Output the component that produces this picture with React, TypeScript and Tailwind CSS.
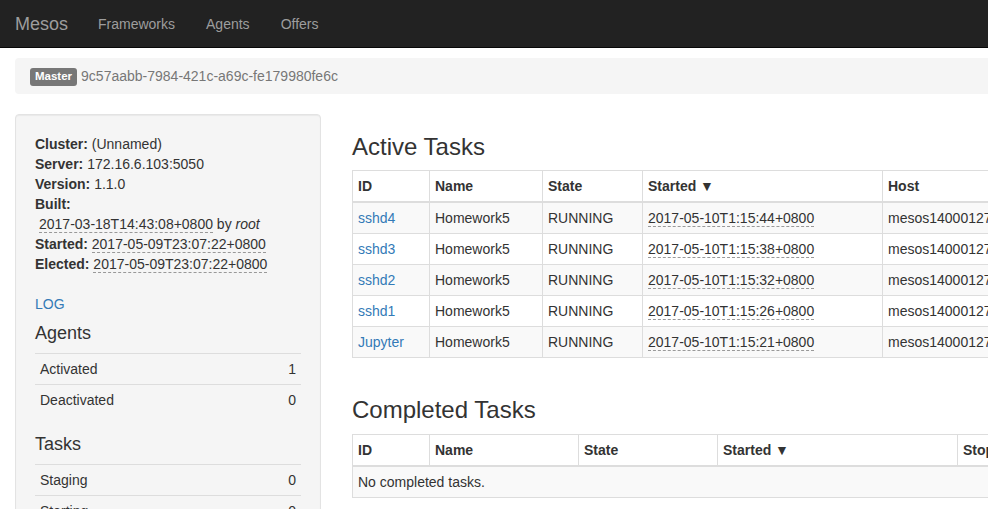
import React from 'react';

const activeTasks = [
  { id: 'sshd4', name: 'Homework5', state: 'RUNNING', started: '2017-05-10T1:15:44+0800', host: 'mesos1400012701' },
  { id: 'sshd3', name: 'Homework5', state: 'RUNNING', started: '2017-05-10T1:15:38+0800', host: 'mesos1400012701' },
  { id: 'sshd2', name: 'Homework5', state: 'RUNNING', started: '2017-05-10T1:15:32+0800', host: 'mesos1400012701' },
  { id: 'sshd1', name: 'Homework5', state: 'RUNNING', started: '2017-05-10T1:15:26+0800', host: 'mesos1400012701' },
  { id: 'Jupyter', name: 'Homework5', state: 'RUNNING', started: '2017-05-10T1:15:21+0800', host: 'mesos1400012701' },
];

function Abbr({ children }: { children: React.ReactNode }) {
  return <span className="border-b border-dashed border-[#999] cursor-help">{children}</span>;
}

function StatTable({ rows }: { rows: [string, number][] }) {
  return (
    <table className="w-full mb-5">
      <tbody>
        {rows.map(([label, value]) => (
          <tr key={label} className="border-t border-[#ddd]">
            <td className="px-[5px] py-[5px] leading-5">{label}</td>
            <td className="px-[5px] py-[5px] leading-5 text-right">{value}</td>
          </tr>
        ))}
      </tbody>
    </table>
  );
}

const th = 'border border-[#ddd] border-b-2 px-[5px] py-[5px] text-left font-bold leading-5 align-bottom';
const td = 'border border-[#ddd] px-[5px] py-[5px] leading-5 whitespace-nowrap overflow-hidden';

export default function App() {
  return (
    <div className="w-full overflow-hidden bg-white text-[14px] leading-5 text-[#333] font-['Liberation_Sans',Arial,sans-serif]">
      <div className="w-[1344px]">
        {/* Navbar */}
        <div className="h-12 bg-[#222] border-b border-[#080808] flex items-center mb-[10px]">
          <span className="px-[15px] text-[18px] text-[#9d9d9d]">Mesos</span>
          <span className="px-[15px] text-[#9d9d9d]">Frameworks</span>
          <span className="pl-[16px] pr-[15px] text-[#9d9d9d]">Agents</span>
          <span className="pl-[16px] pr-[15px] text-[#9d9d9d]">Offers</span>
        </div>

        <div className="px-[15px]">
          {/* Breadcrumb */}
          <div className="bg-[#f5f5f5] rounded py-2 px-[15px] mb-5 flex items-center h-9">
            <span className="bg-[#777] text-white font-bold text-[11.5px] leading-none rounded-[3px] px-[5px] h-[18px] flex items-center mr-[4px] mt-[1px]">Master</span>
            <span className="text-[#777]">9c57aabb-7984-421c-a69c-fe179980fe6c</span>
          </div>

          <div className="flex items-start">
            {/* Sidebar */}
            <div className="w-[306px] shrink-0 bg-[#f5f5f5] border border-[#e3e3e3] rounded p-[19px] shadow-[inset_0_1px_1px_rgba(0,0,0,0.05)] h-[420px]">
              <div><strong>Cluster:</strong> (Unnamed)</div>
              <div><strong>Server:</strong> 172.16.6.103:5050</div>
              <div><strong>Version:</strong> 1.1.0</div>
              <div><strong>Built:</strong></div>
              <div className="pl-[4px]"><Abbr>2017-03-18T14:43:08+0800</Abbr> by <em>root</em></div>
              <div><strong>Started:</strong> <Abbr>2017-05-09T23:07:22+0800</Abbr></div>
              <div><strong>Elected:</strong> <Abbr>2017-05-09T23:07:22+0800</Abbr></div>
              <div className="mt-5"><a className="text-[#337ab7]">LOG</a></div>
              <h4 className="text-[18px] leading-[19.8px] mt-[10px] mb-[9px]">Agents</h4>
              <StatTable rows={[['Activated', 1], ['Deactivated', 0]]} />
              <h4 className="text-[18px] leading-[19.8px] my-[9px]">Tasks</h4>
              <StatTable rows={[['Staging', 0], ['Starting', 0], ['Running', 5], ['Killing', 0]]} />
            </div>

            {/* Main */}
            <div className="ml-[31px] w-[977px]">
              <h3 className="text-[24px] leading-[26.4px] mt-5 mb-[10px]">Active Tasks</h3>
              <table className="w-full table-fixed mb-[39px]">
                <thead>
                  <tr>
                    <th className={`${th} w-[77px]`}>ID</th>
                    <th className={`${th} w-[113px]`}>Name</th>
                    <th className={`${th} w-[100px]`}>State</th>
                    <th className={`${th} w-[240px]`}>Started ▼</th>
                    <th className={`${th} w-[300px]`}>Host</th>
                    <th className={th}>Sandbox</th>
                  </tr>
                </thead>
                <tbody>
                  {activeTasks.map((t, i) => (
                    <tr key={t.id} className={i % 2 === 0 ? 'bg-[#f9f9f9]' : ''}>
                      <td className={td}><a className="text-[#337ab7]">{t.id}</a></td>
                      <td className={td}>{t.name}</td>
                      <td className={td}>{t.state}</td>
                      <td className={td}><Abbr>{t.started}</Abbr></td>
                      <td className={td}>{t.host}</td>
                      <td className={td}><a className="text-[#337ab7]">Sandbox</a></td>
                    </tr>
                  ))}
                </tbody>
              </table>

              <h3 className="text-[24px] leading-[26.4px] mb-[10px]">Completed Tasks</h3>
              <table className="w-full table-fixed mb-5">
                <thead>
                  <tr>
                    <th className={`${th} w-[77px]`}>ID</th>
                    <th className={`${th} w-[149px]`}>Name</th>
                    <th className={`${th} w-[139px]`}>State</th>
                    <th className={`${th} w-[240px]`}>Started ▼</th>
                    <th className={`${th} w-[200px]`}>Stopped</th>
                    <th className={th}>Host</th>
                  </tr>
                </thead>
                <tbody>
                  <tr className="bg-[#f9f9f9]">
                    <td className={td} colSpan={6}>No completed tasks.</td>
                  </tr>
                </tbody>
              </table>
            </div>
          </div>
        </div>
      </div>
    </div>
  );
}
